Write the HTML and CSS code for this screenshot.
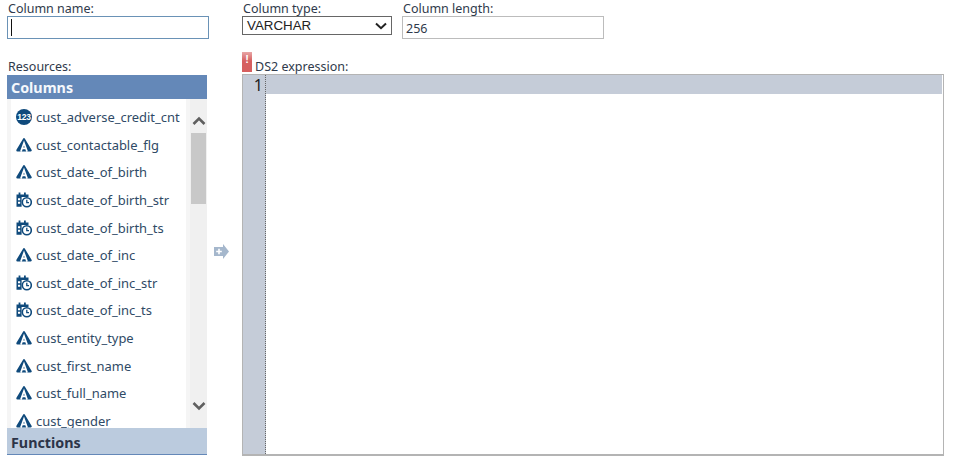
FILE: index.html
```html
<!DOCTYPE html>
<html lang="en">
<head>
<meta charset="utf-8">
<title>Column editor</title>
<link rel="stylesheet" href="styles.css">
</head>
<body>
<svg class="defs" width="0" height="0" aria-hidden="true">
  <symbol id="i-char" viewBox="0 0 16 16">
    <path d="M8 2.2 14.6 13.4H1.4Z" fill="#0f4a7c" stroke="#0f4a7c" stroke-width="2.2" stroke-linejoin="round"/>
    <path d="M4.9 14.6 8 6 11.1 14.6M6.2 11.4H9.8" fill="none" stroke="#fff" stroke-width="1.7"/>
  </symbol>
  <symbol id="i-date" viewBox="0 0 16 16">
    <path d="M.5 2.4H2.6V.4H4.4V2.4H8V.4H9.8V2.4H12.5V5H5.6V14.8H.5Z" fill="#0f4a7c"/>
    <path d="M2 6.2H4.2V8.2H2ZM2 9.8H4.2V11.8H2Z" fill="#fff"/>
    <circle cx="10.8" cy="10.2" r="4.5" fill="#fff" stroke="#0f4a7c" stroke-width="1.6"/>
    <path d="M10.8 7.8V10.6H13" fill="none" stroke="#0f4a7c" stroke-width="1.3"/>
  </symbol>
</svg>

<main class="page">
  <section class="fields">
    <div class="field field-name">
      <label class="label" for="col-name">Column name:</label>
      <div class="input input-focus" id="col-name"><span class="caret"></span></div>
    </div>
    <div class="field field-type">
      <span class="label">Column type:</span>
      <div class="select">
        <span>VARCHAR</span>
        <svg class="select-arrow" width="12" height="8" viewBox="0 0 12 8"><path d="M1 1.5 6 6.2 11 1.5" fill="none" stroke="#222" stroke-width="2"/></svg>
      </div>
    </div>
    <div class="field field-length">
      <span class="label">Column length:</span>
      <div class="input input-value">256</div>
    </div>
  </section>

  <section class="workspace">
    <div class="resources">
      <div class="label">Resources:</div>
      <div class="accordion">
        <div class="acc-head acc-open">Columns</div>
        <div class="acc-body">
          <ul class="list">
            <li><span class="icon icon-num">123</span>cust_adverse_credit_cnt</li>
            <li><svg class="icon"><use href="#i-char"/></svg>cust_contactable_flg</li>
            <li><svg class="icon"><use href="#i-char"/></svg>cust_date_of_birth</li>
            <li><svg class="icon"><use href="#i-date"/></svg>cust_date_of_birth_str</li>
            <li><svg class="icon"><use href="#i-date"/></svg>cust_date_of_birth_ts</li>
            <li><svg class="icon"><use href="#i-char"/></svg>cust_date_of_inc</li>
            <li><svg class="icon"><use href="#i-date"/></svg>cust_date_of_inc_str</li>
            <li><svg class="icon"><use href="#i-date"/></svg>cust_date_of_inc_ts</li>
            <li><svg class="icon"><use href="#i-char"/></svg>cust_entity_type</li>
            <li><svg class="icon"><use href="#i-char"/></svg>cust_first_name</li>
            <li><svg class="icon"><use href="#i-char"/></svg>cust_full_name</li>
            <li><svg class="icon"><use href="#i-char"/></svg>cust_gender</li>
          </ul>
          <div class="scrollbar">
            <svg class="chev chev-up" width="14" height="10" viewBox="0 0 14 10"><path d="M1.5 8 7 2.5 12.5 8" fill="none" stroke="#5f5f5f" stroke-width="2.6"/></svg>
            <div class="thumb"></div>
            <svg class="chev chev-down" width="14" height="10" viewBox="0 0 14 10"><path d="M1.5 2 7 7.5 12.5 2" fill="none" stroke="#5f5f5f" stroke-width="2.6"/></svg>
          </div>
        </div>
        <div class="acc-head acc-closed">Functions</div>
      </div>
    </div>

    <div class="transfer">
      <svg width="15" height="15" viewBox="0 0 15 15"><path d="M0 3H9V0L15 7.5 9 15V12H0Z" fill="#a5b7cc"/><path d="M4.2 4.8H5.8V6.8H7.8V8.2H5.8V10.2H4.2V8.2H2.2V6.8H4.2Z" fill="#fff"/></svg>
    </div>

    <div class="expression">
      <div class="expr-head">
        <span class="error-flag">!</span>
        <span class="label expr-label">DS2 expression:</span>
      </div>
      <div class="editor">
        <div class="gutter"><div class="line-no">1</div></div>
        <div class="code"><div class="active-line"></div></div>
      </div>
    </div>
  </section>
</main>
</body>
</html>
```

FILE: styles.css
```css
* { box-sizing: border-box; }
html, body { margin: 0; padding: 0; background: #fff; }
body {
  font-family: "Noto Sans", "Open Sans", sans-serif;
  font-size: 13px;
  color: #2f3a4b;
  width: 954px;
  height: 464px;
  overflow: hidden;
}
.defs { position: absolute; }
.page { padding-left: 7px; }

.label { display: block; font-size: 12.5px; line-height: 15px; min-height: 15px; color: #2f3a4b; padding-left: 1px; white-space: nowrap; }

.fields { display: flex; height: 59px; }
.field { padding-top: 1px; }
.field-name { width: 202px; margin-right: 33px; }
.field-type { width: 150px; margin-right: 10px; }
.field-length { width: 202px; }

.input { height: 23px; border: 1px solid #bcbcbc; background: #fff; }
.input-focus { border-color: #6a92b6; padding: 2px 0 0 3px; }
.caret { display: block; width: 1px; height: 17px; background: #111; }
.input-value { font-size: 12.5px; line-height: 23px; padding-left: 3px; color: #2f3a4b; }

.select {
  height: 19px;
  border: 1px solid #666;
  display: flex;
  align-items: center;
  justify-content: space-between;
  padding: 0 0 0 4px;
  font-family: "Liberation Sans", sans-serif;
  font-size: 13.33px;
  color: #222;
}
.select-arrow { margin-right: 4px; }

.workspace { display: flex; }
.resources { width: 200px; }
.accordion { width: 200px; margin-top: 1px; }
.acc-head { font-weight: 700; font-size: 14.3px; padding-left: 4px; }
.acc-open { height: 24px; line-height: 25px; background: #6488b8; color: #f5f8fc; }
.acc-closed { height: 27px; line-height: 29px; background: #bbcbde; color: #2c3448; border-bottom: 1px solid #6488b8; }
.acc-body { display: flex; height: 329px; background: #f5f5f5; overflow: hidden; padding-left: 4px; }

.list { list-style: none; margin: 0; padding: 4.4px 0 0 0; width: 175px; background: #fff; flex: none; height: 329px; overflow: hidden; }
.list li { display: flex; align-items: center; height: 27.6px; padding-left: 5px; font-size: 12.95px; color: #2f4a66; white-space: nowrap; }
.icon { width: 16px; height: 16px; flex: none; margin-right: 4px; }
.icon-num {
  border-radius: 50%;
  background: #0f4a7c;
  color: #fff;
  font: 700 8.5px/16px "Liberation Sans", sans-serif;
  letter-spacing: -0.3px;
  text-align: center;
}

.scrollbar { width: 17px; margin-left: 4px; background: #f0f0f0; display: flex; flex-direction: column; align-items: center; flex: none; }
.chev { flex: none; }
.chev-up { margin-top: 17px; }
.thumb { width: 15px; height: 71px; margin-top: 7px; background: #c8c8c8; flex: none; }
.chev-down { margin-top: 197px; }

.transfer { width: 35px; padding: 185px 0 0 7px; }

.expression { width: 702px; margin-top: -7px; }
.expr-head { display: flex; height: 22px; }
.error-flag {
  width: 10px; height: 20px;
  background: linear-gradient(#e8a6a6, #d65f5f 45%, #d65f5f);
  color: #fff; font: 700 11px/14px "Liberation Sans", sans-serif; text-align: center;
}
.expr-label { margin-left: 2px; padding-top: 7px; }
.editor { display: flex; height: 382px; border: 1px solid #b4b4b4; border-bottom-width: 2px; }
.gutter { width: 23px; background: #c5ccd8; border-right: 1px dotted #666; flex: none; }
.line-no { font-size: 16px; line-height: 20px; text-align: right; padding-right: 2px; color: #222; }
.code { flex: 1; padding-right: 1px; }
.active-line { height: 19px; background: #c5ccd8; }
```
